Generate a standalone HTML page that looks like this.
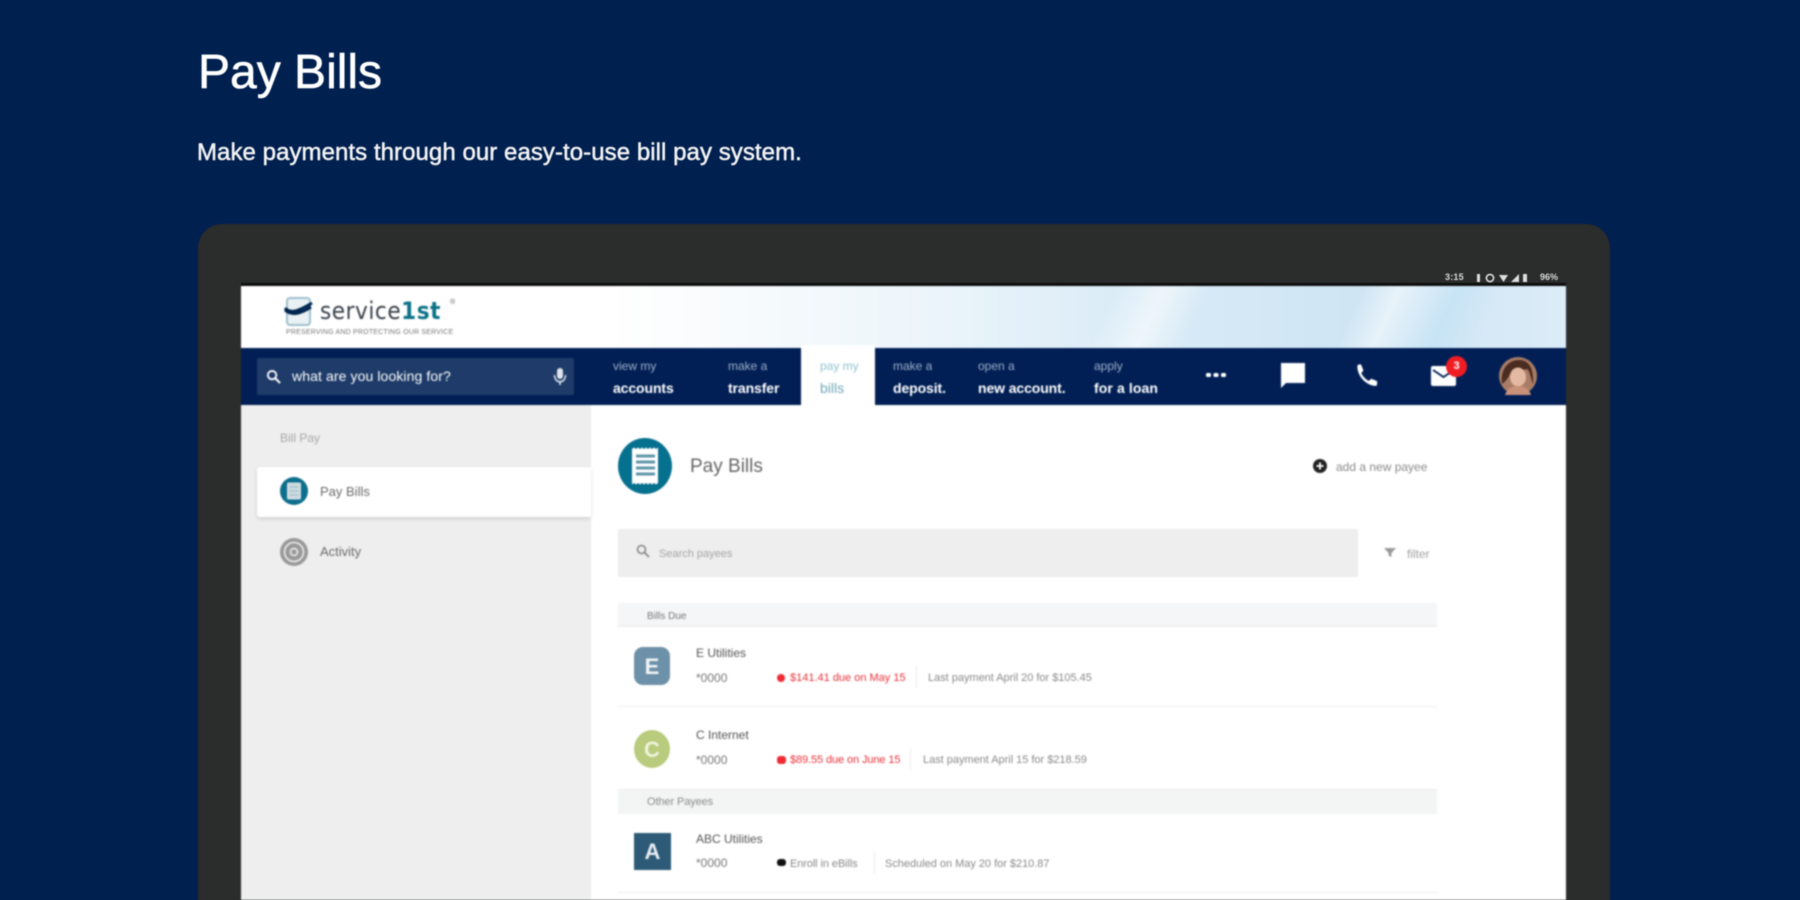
<!DOCTYPE html>
<html lang="en"><head><meta charset="utf-8"><title>Pay Bills</title>
<style>
html,body{margin:0;padding:0;width:1800px;height:900px;overflow:hidden;background:#00204f}
body{font-family:"Liberation Sans",sans-serif;position:relative}
.a{position:absolute;white-space:nowrap}
.t{position:absolute;white-space:nowrap;line-height:1}
#soft{position:absolute;left:0;top:0;width:1800px;height:900px;filter:blur(.6px)}
#screen{filter:blur(.5px)}
.nt{font-size:12px;color:#9fb0c8}
.nb{font-size:14px;color:#fff;font-weight:700;letter-spacing:-.1px}
.g{color:#8a8a8a}
</style></head><body>
<div id="soft">
<div class="t" style="left:198px;top:49px;font-size:48px;color:#fff;-webkit-text-stroke:.6px #fff">Pay Bills</div>
<div class="t" style="left:197px;top:141px;font-size:24px;color:#f2f2f2;letter-spacing:.06px;-webkit-text-stroke:.5px #f2f2f2">Make payments through our easy-to-use bill pay system.</div>

<div class="a" style="left:198px;top:224px;width:1412px;height:700px;background:#2b2c2c;border-radius:24px"></div>
<div class="a" style="left:241px;top:270px;width:1325px;height:16px;background:#1b1b1b;background:linear-gradient(#2b2c2c 0,#2b2c2c 13px,#0c0c0c 13px)"></div>
<div class="t" style="left:1445px;top:273px;font-size:9px;color:#d8d8d8;font-weight:700;letter-spacing:.2px">3:15</div>
<svg class="a" style="left:1473px;top:272px" width="64" height="12" viewBox="0 0 64 12" fill="#ddd"><rect x="4" y="2" width="3" height="8"/><circle cx="17" cy="6" r="3.6" fill="none" stroke="#ddd" stroke-width="1.6"/><path d="M26 3h9l-4.500 7z"/><path d="M38 10l8-8v8z"/><rect x="50" y="2" width="4" height="8"/></svg>
<div class="t" style="left:1540px;top:273px;font-size:9px;color:#d8d8d8;font-weight:700">96%</div>

<div id="screen" class="a" style="left:241px;top:286px;width:1325px;height:614px;background:#fff;overflow:hidden">
  <!-- header -->
  <div class="a" style="left:0;top:0;width:1325px;height:62px;background:linear-gradient(90deg,#fff 0,#fff 28%,#eef6fb 50%,#d9ebf7 68%,#cfe5f4 85%,#dcecf8 100%)"></div>
  <div class="a" style="left:700px;top:0;width:560px;height:62px;background:linear-gradient(115deg,transparent 0,transparent 30%,rgba(255,255,255,.55) 38%,transparent 46%,transparent 72%,rgba(255,255,255,.5) 78%,rgba(190,225,245,.6) 88%,transparent 96%)"></div>
  <svg class="a" style="left:42px;top:9px" width="32" height="33" viewBox="0 0 32 33"><rect x="4" y="3" width="23" height="27" rx="3" fill="#e9f1f5" stroke="#9fc0cc" stroke-width="2"/><path d="M2 13c5 6 12 4 27-5M2 15c7 6 15 4 26-3" fill="none" stroke="#00264f" stroke-width="3"/></svg>
  <div class="t" style="left:79px;top:13px;font-size:24px;color:#38414b;font-family:'DejaVu Sans',sans-serif;letter-spacing:.6px;transform:scaleX(.9);transform-origin:0 0">service<span style="color:#0d7287;font-weight:700">1st</span></div>
  <div class="t" style="left:209px;top:13px;font-size:7px;color:#666">®</div>
  <div class="t" style="left:45px;top:43px;font-size:7px;color:#777;letter-spacing:.2px">PRESERVING AND PROTECTING OUR SERVICE</div>

  <!-- nav -->
  <div class="a" style="left:0;top:62px;width:1325px;height:57px;background:#011f55"></div>
  <div class="a" style="left:560px;top:59px;width:74px;height:62px;background:#fff"></div>
  <div class="a" style="left:16px;top:72px;width:317px;height:37px;background:#1e3b69;border-radius:2px"></div>
  <svg class="a" style="left:25px;top:83px" width="15" height="15" viewBox="0 0 16 16"><circle cx="6.500" cy="6.500" r="4.500" fill="none" stroke="#fff" stroke-width="2"/><path d="M10 10l5 5" stroke="#fff" stroke-width="2.200"/></svg>
  <div class="t" style="left:51px;top:83px;font-size:14px;color:#fff;letter-spacing:.1px">what are you looking for?</div>
  <svg class="a" style="left:312px;top:81px" width="14" height="19" viewBox="0 0 14 19" fill="#dfe4ec"><rect x="4" y="1" width="6" height="11" rx="3"/><path d="M1.500 8c0 9 11 9 11 0" fill="none" stroke="#dfe4ec" stroke-width="1.500"/><rect x="6.200" y="14" width="1.600" height="4"/></svg>

  <div class="t nt" style="left:372px;top:74px">view my</div><div class="t nb" style="left:372px;top:95px">accounts</div>
  <div class="t nt" style="left:487px;top:74px">make a</div><div class="t nb" style="left:487px;top:95px">transfer</div>
  <div class="t" style="left:579px;top:74px;font-size:12px;color:#8fc4cf">pay my</div><div class="t" style="left:579px;top:95px;font-size:14px;color:#6fa9b8">bills</div>
  <div class="t nt" style="left:652px;top:74px">make a</div><div class="t nb" style="left:652px;top:95px">deposit.</div>
  <div class="t nt" style="left:737px;top:74px">open a</div><div class="t nb" style="left:737px;top:95px">new account.</div>
  <div class="t nt" style="left:853px;top:74px">apply</div><div class="t nb" style="left:853px;top:95px;letter-spacing:.1px">for a loan</div>
  <svg class="a" style="left:964px;top:86px" width="22" height="6" viewBox="0 0 22 6" fill="#fff"><rect x="1" y="1" width="5" height="4" rx="1.500"/><rect x="8.500" y="1" width="5" height="4" rx="1.500"/><rect x="16" y="1" width="5" height="4" rx="1.500"/></svg>
  <svg class="a" style="left:1038px;top:75px" width="28" height="28" viewBox="0 0 28 28"><path d="M2 2h24v20H7l-5 5z" fill="#fff"/></svg>
  <svg class="a" style="left:1113px;top:76px" width="26" height="26" viewBox="0 0 24 24"><path d="M6.600 2.500c.9 2.200 1.600 4 2.100 5.400l-2 2.400c1.400 2.900 3.800 5.500 6.900 7.200l2.300-2c1.800.7 3.500 1.300 5.300 2.100.4 1 .3 3.100-.5 4.400-9.200.5-18.500-9.700-17.500-19 1.200-.8 2.500-1 3.400-.5z" fill="#fff"/></svg>
  <svg class="a" style="left:1189px;top:78px" width="27" height="23" viewBox="0 0 27 23"><rect x="1" y="2" width="25" height="20" rx="2" fill="#fff"/><path d="M3 6l10.500 7L24 6" fill="none" stroke="#011f55" stroke-width="1.800"/></svg>
  <div class="a" style="left:1205px;top:70px;width:21px;height:21px;border-radius:50%;background:#ef1c24;color:#fff;font-size:11px;font-weight:700;text-align:center;line-height:21px">3</div>
  <svg class="a" style="left:1258px;top:71px" width="38" height="38" viewBox="0 0 38 38"><circle cx="19" cy="19" r="19" fill="#a97c66"/><path d="M3 27C1 10 11 3 20 3c10 0 15 8 14 24-3-8-3-13-6-15-6 2-12 1-14 0-3 3-3 9-11 15z" fill="#4a2c20"/><ellipse cx="19" cy="20" rx="8" ry="9.500" fill="#e4b9a2"/><path d="M6 38c2-7 8-9 13-9s11 2 13 9z" fill="#c9917a"/></svg>

  <!-- sidebar -->
  <div class="a" style="left:0;top:119px;width:350px;height:495px;background:#eee"></div>
  <div class="t" style="left:39px;top:146px;font-size:12px;color:#a8a8a8">Bill Pay</div>
  <div class="a" style="left:16px;top:181px;width:334px;height:50px;background:#fff;border-radius:3px 0 0 3px;box-shadow:0 2px 5px rgba(0,0,0,.12)"></div>
  <svg class="a" style="left:39px;top:191px" width="28" height="28" viewBox="0 0 28 28"><circle cx="14" cy="14" r="14" fill="#0c6f8c"/><rect x="7" y="5.500" width="14" height="17" rx="1.500" fill="#cfdde3"/><path d="M9.500 10h9M9.500 14h9M9.500 18h9" stroke="#a9c2cd" stroke-width="1.500"/></svg>
  <div class="t" style="left:79px;top:199px;font-size:13px;color:#6a6a6a">Pay Bills</div>
  <svg class="a" style="left:39px;top:252px" width="28" height="28" viewBox="0 0 28 28"><circle cx="14" cy="14" r="14" fill="#9a9a9a"/><circle cx="14" cy="14" r="9.500" fill="none" stroke="#eee" stroke-width="1.500"/><circle cx="14" cy="14" r="3.500" fill="none" stroke="#eee" stroke-width="1.500"/></svg>
  <div class="t" style="left:79px;top:259px;font-size:13px;color:#6a6a6a">Activity</div>

  <!-- main -->
  <svg class="a" style="left:377px;top:152px" width="54" height="56" viewBox="0 0 54 56"><ellipse cx="27" cy="28" rx="27" ry="28" fill="#06708f"/><path d="M14 11l2-1.500 2 1.500 2-1.500 2 1.500 2-1.500 2 1.500 2-1.500 2 1.500 2-1.500 2 1.500 2-1.500 2 1.500 2-1.500V45l-2 1.500-2-1.500-2 1.500-2-1.500-2 1.500-2-1.500-2 1.500-2-1.500-2 1.500-2-1.500-2 1.500-2-1.500-2 1.500z" fill="#fff"/><path d="M18 18h19M18 24h19M18 30h19M18 36h19" stroke="#5f96a8" stroke-width="3"/></svg>
  <div class="t" style="left:449px;top:171px;font-size:19px;color:#666">Pay Bills</div>
  <svg class="a" style="left:1072px;top:173px" width="14" height="14" viewBox="0 0 14 14"><circle cx="7" cy="7" r="7" fill="#222"/><path d="M7 3.500v7M3.500 7h7" stroke="#fff" stroke-width="1.800"/></svg>
  <div class="t g" style="left:1095px;top:175px;font-size:12px">add a new payee</div>

  <div class="a" style="left:377px;top:243px;width:740px;height:48px;background:#eee;border-radius:2px"></div>
  <svg class="a" style="left:395px;top:258px" width="14" height="14" viewBox="0 0 14 14"><circle cx="5.500" cy="5.500" r="4" fill="none" stroke="#888" stroke-width="1.600"/><path d="M8.500 8.500l4.500 4.500" stroke="#888" stroke-width="1.800"/></svg>
  <div class="t" style="left:418px;top:263px;font-size:11px;color:#a5a5a5">Search payees</div>
  <svg class="a" style="left:1142px;top:261px" width="14" height="11" viewBox="0 0 14 11"><path d="M1 1h12L8.500 6v4L5.500 8.500V6z" fill="#9b9b9b"/></svg>
  <div class="t" style="left:1166px;top:262px;font-size:12px;color:#a0a0a0">filter</div>

  <div class="a" style="left:377px;top:317px;width:819px;height:22px;background:#f5f6f7;border-bottom:2px solid #f0f0f0"></div>
  <div class="t" style="left:406px;top:326px;font-size:10px;color:#777">Bills Due</div>

  <div class="a" style="left:393px;top:361px;width:36px;height:38px;border-radius:9px;background:#6d91a9;color:#f2f6f8;font-size:22px;text-align:center;line-height:39px;font-weight:700">E</div>
  <div class="t" style="left:455px;top:361px;font-size:12px;color:#555">E Utilities</div>
  <div class="t" style="left:455px;top:386px;font-size:12px;color:#777">*0000</div>
  <div class="a" style="left:536px;top:388px;width:8px;height:8px;border-radius:50%;background:#ef2b33"></div>
  <div class="t" style="left:549px;top:387px;font-size:11px;color:#e8343c">$141.41 due on May 15</div>
  <div class="a" style="left:675px;top:380px;width:1px;height:22px;background:#eee"></div>
  <div class="t g" style="left:687px;top:387px;font-size:11px;letter-spacing:-.02px">Last payment April 20 for $105.45</div>
  <div class="a" style="left:377px;top:420px;width:819px;height:1px;background:#f2f2f2"></div>

  <div class="a" style="left:393px;top:444px;width:36px;height:38px;border-radius:50%;background:#b9cb7c;color:#eef3dc;font-size:22px;text-align:center;line-height:39px;font-weight:700">C</div>
  <div class="t" style="left:455px;top:443px;font-size:12px;color:#555">C Internet</div>
  <div class="t" style="left:455px;top:468px;font-size:12px;color:#777">*0000</div>
  <div class="a" style="left:536px;top:470px;width:9px;height:8px;border-radius:3px;background:#ef2b33"></div>
  <div class="t" style="left:549px;top:469px;font-size:11px;color:#e8343c;letter-spacing:-.1px">$89.55 due on June 15</div>
  <div class="a" style="left:669px;top:462px;width:1px;height:22px;background:#eee"></div>
  <div class="t g" style="left:682px;top:469px;font-size:11px;letter-spacing:-.02px">Last payment April 15 for $218.59</div>

  <div class="a" style="left:377px;top:503px;width:819px;height:24px;background:#f3f5f5;border-top:1px solid #eee"></div>
  <div class="t" style="left:406px;top:511px;font-size:11px;color:#8a8a8a;letter-spacing:-.1px">Other Payees</div>

  <div class="a" style="left:393px;top:547px;width:37px;height:37px;background:#2c5a77;color:#e8eef2;font-size:22px;text-align:center;line-height:38px;font-weight:700">A</div>
  <div class="t" style="left:455px;top:547px;font-size:12px;color:#555">ABC Utilities</div>
  <div class="t" style="left:455px;top:571px;font-size:12px;color:#777">*0000</div>
  <div class="a" style="left:536px;top:573px;width:9px;height:7px;border-radius:3px;background:#111"></div>
  <div class="t g" style="left:549px;top:573px;font-size:11px;letter-spacing:-.1px">Enroll in eBills</div>
  <div class="a" style="left:633px;top:566px;width:1px;height:22px;background:#eee"></div>
  <div class="t g" style="left:644px;top:573px;font-size:11px;letter-spacing:-.02px">Scheduled on May 20 for $210.87</div>
  <div class="a" style="left:377px;top:606px;width:819px;height:1px;background:#f0f0f0"></div>
</div>
</div>
</body></html>
